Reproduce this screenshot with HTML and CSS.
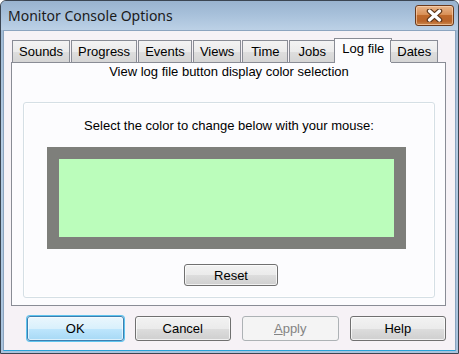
FILE: index.html
```html
<!DOCTYPE html>
<html lang="en">
<head>
    <meta charset="UTF-8">
    <title>Monitor Console Options</title>
    <link rel="stylesheet" href="styles.css">
</head>
<body>
    <div class="window">
        <div class="titlebar">
            <span class="title">Monitor Console Options</span>
            <button class="close" aria-label="Close">
                <svg width="17" height="13" viewBox="0 0 17 13">
                    <path d="M3.5 2 L13.5 11 M13.5 2 L3.5 11" stroke="#5a3418" stroke-width="5.5" stroke-linecap="round"/>
                    <path d="M3.5 2 L13.5 11 M13.5 2 L3.5 11" stroke="#ffffff" stroke-width="3.2" stroke-linecap="round"/>
                </svg>
            </button>
        </div>

        <div class="client">
            <div class="tabs">
                <div class="tab">Sounds</div>
                <div class="tab">Progress</div>
                <div class="tab">Events</div>
                <div class="tab">Views</div>
                <div class="tab">Time</div>
                <div class="tab">Jobs</div>
                <div class="tab active">Log file</div>
                <div class="tab">Dates</div>
            </div>

            <div class="panel">
                <p class="heading">View log file button display color selection</p>
                <div class="group">
                    <p class="hint">Select the color to change below with your mouse:</p>
                    <div class="swatch">
                        <div class="swatch-inner"></div>
                    </div>
                    <button class="btn reset">Reset</button>
                </div>
            </div>

            <div class="actions">
                <button class="btn default">OK</button>
                <button class="btn">Cancel</button>
                <button class="btn disabled"><u>A</u>pply</button>
                <button class="btn">Help</button>
            </div>
        </div>
    </div>
</body>
</html>
```

FILE: styles.css
```css
body {
    margin: 0;
    font-family: 'Liberation Sans', Arial, sans-serif;
    font-size: 13px;
    color: #000;
    background: #fff;
}

.window {
    width: 459px;
    height: 354px;
    box-sizing: border-box;
    border: 1px solid #3b4552;
    border-radius: 6px 6px 0 0;
    background: linear-gradient(180deg, #9cb6d2 0%, #b4cbe2 40%, #a9c3dd 100%);
    padding: 0 2px 2px;
    display: flex;
    flex-direction: column;
}

.titlebar {
    height: 29px;
    display: flex;
    align-items: flex-start;
    justify-content: space-between;
    background: linear-gradient(180deg, #99b3cf 0%, #a7c0da 45%, #bcd1e6 100%);
    margin: 0 -2px;
    padding: 0 4px 0 7px;
    border-radius: 5px 5px 0 0;
}

.title {
    font-family: 'Noto Sans', sans-serif;
    font-size: 14px;
    line-height: 20px;
    margin-top: 5px;
    color: #1a1a1a;
}

.close {
    width: 39px;
    height: 21px;
    margin-top: 4px;
    padding: 0;
    border: 1px solid #6a3a1c;
    border-radius: 3px;
    background: linear-gradient(180deg, #e8b58a 0%, #d99057 45%, #c06a2b 50%, #b8642a 80%, #cc8a4e 100%);
    box-shadow: inset 0 0 0 1px rgba(255, 220, 190, 0.6);
    display: flex;
    align-items: center;
    justify-content: center;
}

.client {
    flex: 1;
    background: #f6f2f6;
    border: 1px solid #8ca4bf;
    border-bottom-color: #2aa3d8;
    padding: 7px 9px 0 7px;
    display: flex;
    flex-direction: column;
}

.tabs {
    display: flex;
    align-items: flex-end;
    height: 24px;
    padding-left: 1px;
    position: relative;
    z-index: 1;
}

.tab {
    height: 21px;
    line-height: 21px;
    min-width: 32px;
    text-align: center;
    padding: 0 6px;
    margin-right: 1px;
    border: 1px solid #898c95;
    border-bottom: none;
    background: linear-gradient(180deg, #f3f3f3 0%, #ebebeb 50%, #dedede 51%, #d5d5d5 100%);
}

.tab.active {
    height: 24px;
    line-height: 20px;
    margin: 0 -2px -1px -2px;
    padding: 0 7px;
    background: #fcfcfe;
}

.panel {
    width: 435px;
    height: 244px;
    box-sizing: border-box;
    border: 1px solid #898c95;
    background: #fcfcfe;
    padding: 1px 10px 0 11px;
    display: flex;
    flex-direction: column;
}

.heading {
    margin: 0 0 23px;
    line-height: 15px;
    text-align: center;
}

.group {
    height: 196px;
    box-sizing: border-box;
    border: 1px solid #d5dfe5;
    border-radius: 3px;
    box-shadow: inset 0 0 0 1px #ffffff;
    padding-top: 15px;
    display: flex;
    flex-direction: column;
    align-items: center;
}

.hint {
    margin: 0 0 14px;
    line-height: 15px;
}

.swatch {
    width: 359px;
    height: 102px;
    box-sizing: border-box;
    border: 12px solid #7e7f7b;
    margin-right: 6px;
}

.swatch-inner {
    height: 100%;
    background: #bbfdbb;
}

.btn {
    font-family: 'Liberation Sans', Arial, sans-serif;
    font-size: 13px;
    color: #000;
    width: 97px;
    height: 25px;
    padding: 0;
    border: 1px solid #707070;
    border-radius: 3px;
    background: linear-gradient(180deg, #f2f2f2 0%, #ebebeb 50%, #dddddd 51%, #cfcfcf 100%);
    box-shadow: inset 0 0 0 1px rgba(255, 255, 255, 0.7);
}

.reset {
    width: 94px;
    height: 22px;
    margin-top: 15px;
    margin-left: 4px;
}

.actions {
    display: flex;
    gap: 11px;
    padding: 10px 0 0 16px;
}

.btn.default {
    border-color: #3c7fb1;
    background: linear-gradient(180deg, #eaf6fd 0%, #d9f0fc 50%, #bee6fd 51%, #a7d9f5 100%);
    box-shadow: 0 0 0 1px #5fc4ee, inset 0 0 0 1px rgba(255, 255, 255, 0.6);
}

.btn.disabled {
    color: #838383;
    border-color: #adb2b5;
    background: #f4f4f4;
    box-shadow: none;
}

.btn.disabled u {
    text-decoration: underline;
}
```
